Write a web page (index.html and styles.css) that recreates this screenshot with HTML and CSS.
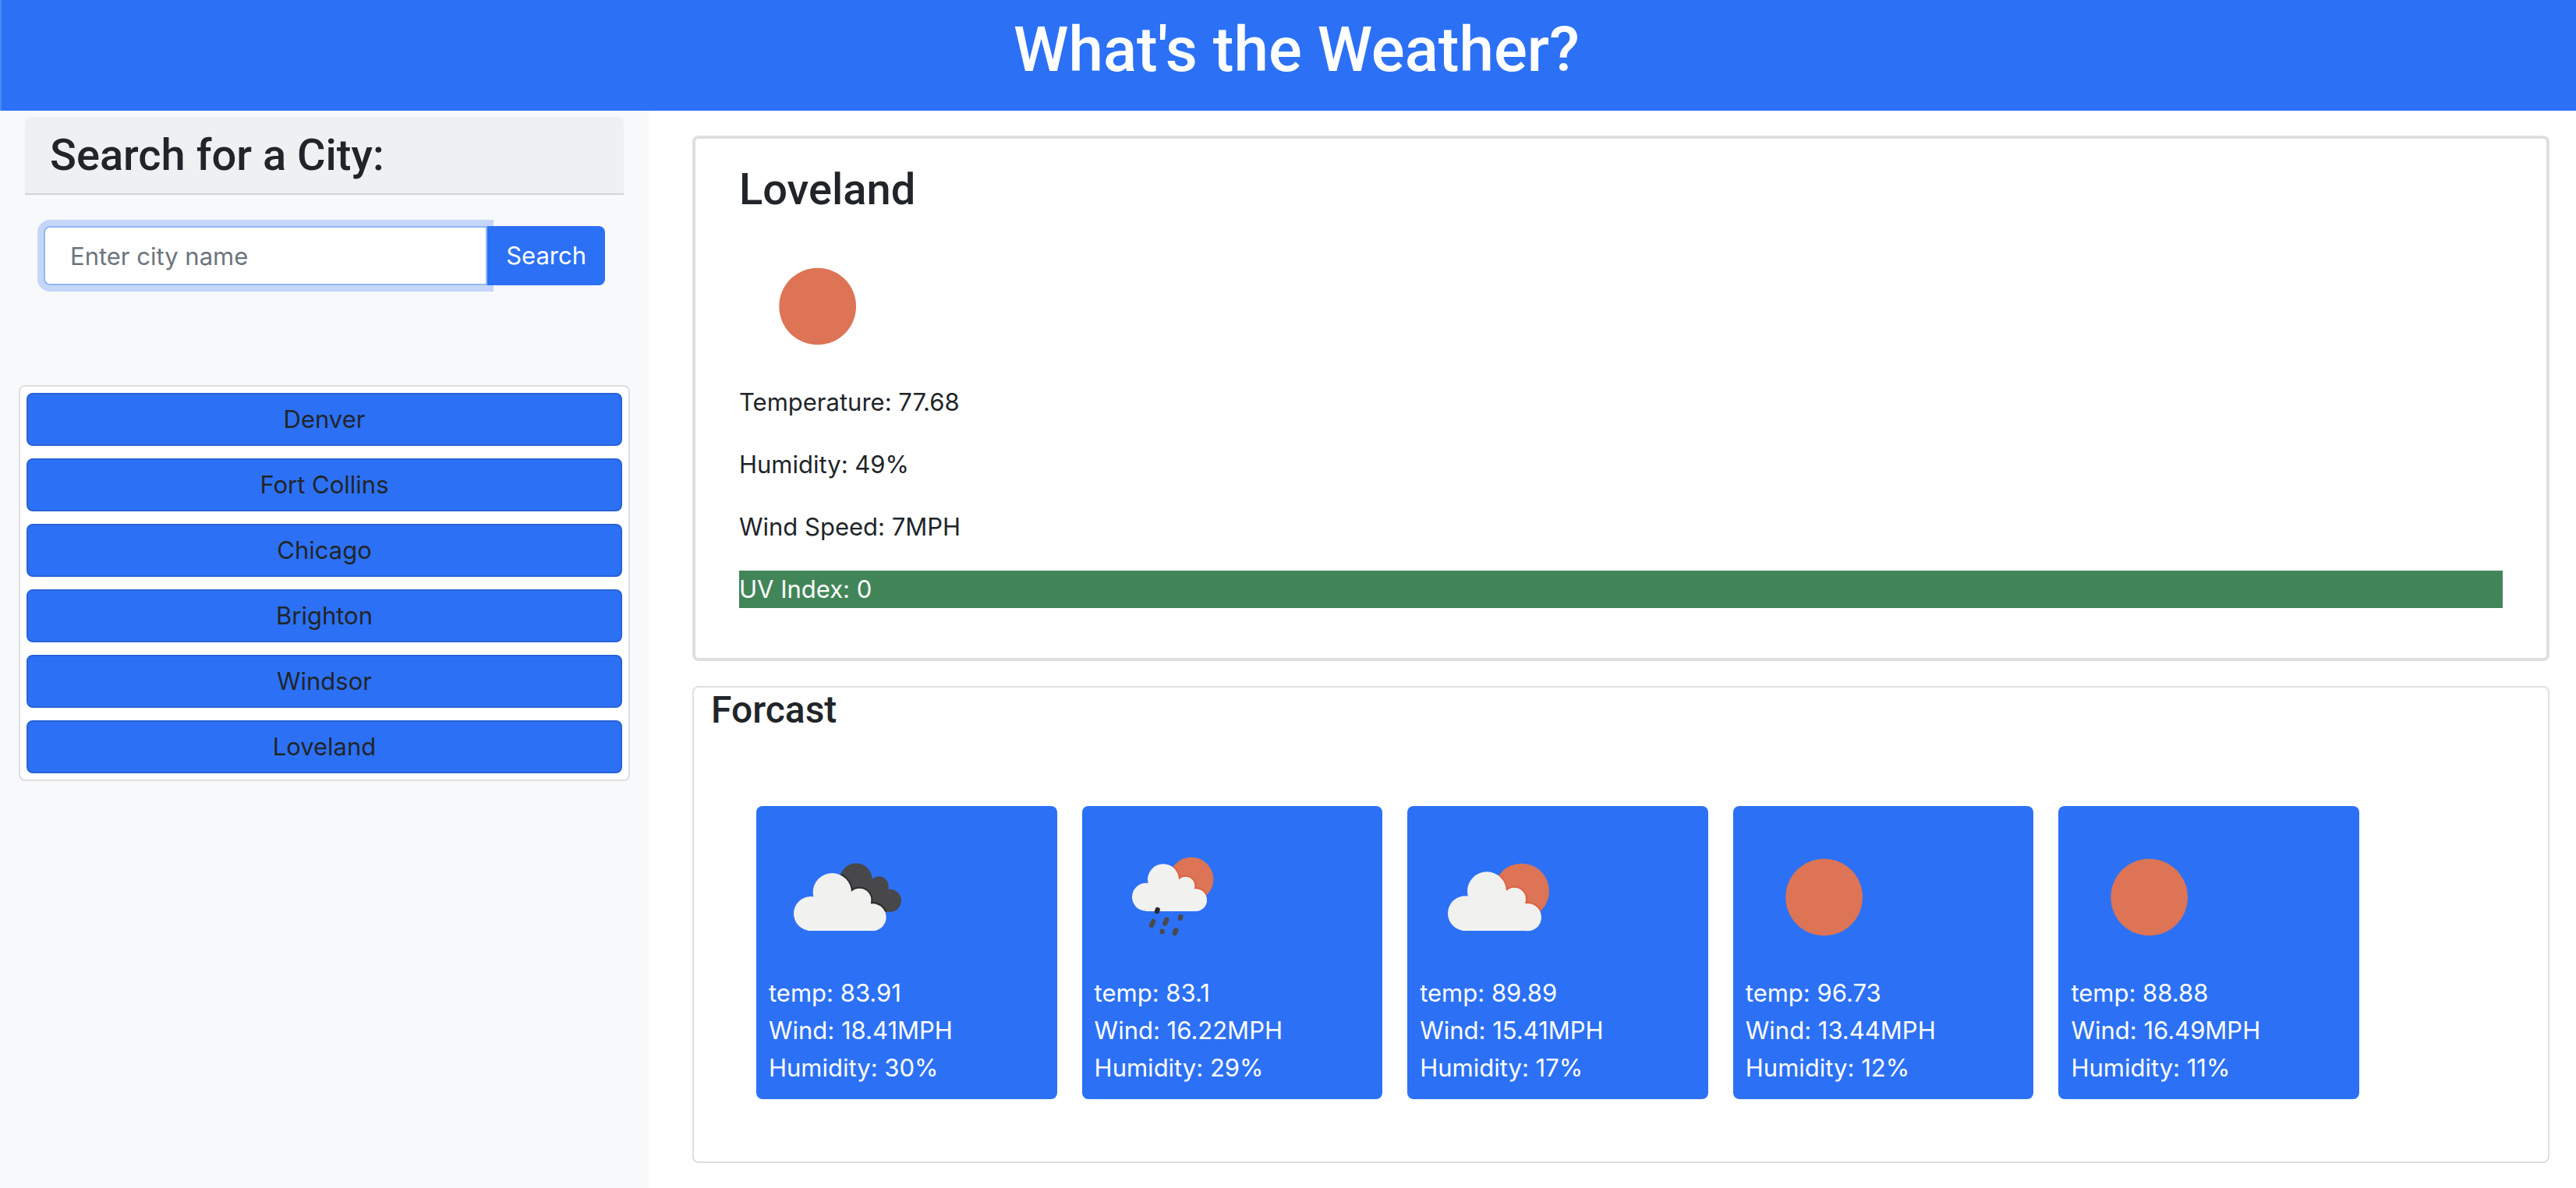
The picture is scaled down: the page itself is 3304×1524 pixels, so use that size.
FILE: index.html
```html
<!DOCTYPE html>
<html lang="en">
<head>
<meta charset="utf-8">
<title>What's the Weather?</title>
<link rel="stylesheet" href="styles.css">
</head>
<body>
<header class="banner"><h1 class="banner-title">What's the Weather?</h1></header>
<div class="layout">
  <aside class="sidebar">
    <h2 class="search-heading"><label for="city">Search for a City:</label></h2>
    <form class="search-form">
      <input class="search-input" id="city" type="text" placeholder="Enter city name">
      <button class="search-button" type="button">Search</button>
    </form>
    <div class="history">
      <button class="history-item" type="button">Denver</button>
      <button class="history-item" type="button">Fort Collins</button>
      <button class="history-item" type="button">Chicago</button>
      <button class="history-item" type="button">Brighton</button>
      <button class="history-item" type="button">Windsor</button>
      <button class="history-item" type="button">Loveland</button>
    </div>
  </aside>
  <main class="content">
    <section class="current">
      <h2 class="current-city">Loveland</h2>
      <svg class="weather-icon" viewBox="0 0 600 600" role="img" aria-label="Clear sky"><circle class="sun" cx="302" cy="303" r="148"/></svg>
      <p class="reading">Temperature: 77.68</p>
      <p class="reading">Humidity: 49%</p>
      <p class="reading">Wind Speed: 7MPH</p>
      <p class="reading uv-low">UV Index: 0</p>
    </section>
    <section class="forecast">
      <h3 class="forecast-heading">Forcast</h3>
      <div class="days">
        <article class="day">
          <svg class="weather-icon" viewBox="0 0 600 600" role="img" aria-label="Broken clouds">
            <clipPath id="dark-cloud"><circle cx="336" cy="234" r="62"/><circle cx="424" cy="260" r="37"/><circle cx="466" cy="316" r="44"/><path d="M280 220L397 232L461 270L450 360L300 360Z"/></clipPath>
            <g clip-path="url(#dark-cloud)">
              <path class="dark" d="M250 160h270v210H250z"/>
              <g class="dark-edge"><circle cx="244" cy="284" r="74"/><circle cx="349" cy="314" r="45"/><circle cx="400" cy="380" r="53"/></g>
            </g>
            <g class="cloud"><circle cx="162" cy="366" r="66"/><circle cx="244" cy="284" r="74"/><circle cx="349" cy="314" r="45"/><circle cx="400" cy="380" r="52"/><path d="M173 300L317 282L393 328L412 432H150V365Z"/></g>
          </svg>
          <p>temp: 83.91</p><p>Wind: 18.41MPH</p><p>Humidity: 30%</p>
        </article>
        <article class="day">
          <svg class="weather-icon" viewBox="0 0 600 600" role="img" aria-label="Rain">
            <clipPath id="rain-sun"><circle cx="372" cy="234" r="85"/></clipPath>
            <circle class="sun" cx="372" cy="234" r="85"/>
            <g class="sun-edge" clip-path="url(#rain-sun)"><circle cx="264" cy="235" r="60"/><circle cx="350" cy="259" r="35"/><circle cx="389" cy="314" r="43"/></g>
            <g class="cloud"><circle cx="198" cy="302" r="54"/><circle cx="264" cy="235" r="60"/><circle cx="350" cy="259" r="35"/><circle cx="389" cy="314" r="43"/><path d="M206 248L323 233L385 272L389 357H198Z"/></g>
            <path class="drops" d="M226 396L219 411M277 389L271 404M331 379L330 383M260 434L260 436M313 430L308 441"/>
            <path class="drops drop-near" d="M242 351L240 357"/>
          </svg>
          <p>temp: 83.1</p><p>Wind: 16.22MPH</p><p>Humidity: 29%</p>
        </article>
        <article class="day">
          <svg class="weather-icon" viewBox="0 0 600 600" role="img" aria-label="Few clouds">
            <clipPath id="few-sun"><circle cx="392" cy="279" r="106"/></clipPath>
            <circle class="sun" cx="392" cy="279" r="106"/>
            <g class="sun-edge" clip-path="url(#few-sun)"><circle cx="258" cy="280" r="75"/><circle cx="364" cy="310" r="44"/><circle cx="415" cy="380" r="53"/></g>
            <g class="cloud"><circle cx="175" cy="365" r="67"/><circle cx="258" cy="280" r="75"/><circle cx="364" cy="310" r="44"/><circle cx="415" cy="380" r="53"/><path d="M186 298L332 279L408 328L428 432H164V365Z"/></g>
          </svg>
          <p>temp: 89.89</p><p>Wind: 15.41MPH</p><p>Humidity: 17%</p>
        </article>
        <article class="day">
          <svg class="weather-icon" viewBox="0 0 600 600" role="img" aria-label="Clear sky"><circle class="sun" cx="302" cy="303" r="148"/></svg>
          <p>temp: 96.73</p><p>Wind: 13.44MPH</p><p>Humidity: 12%</p>
        </article>
        <article class="day">
          <svg class="weather-icon" viewBox="0 0 600 600" role="img" aria-label="Clear sky"><circle class="sun" cx="302" cy="303" r="148"/></svg>
          <p>temp: 88.88</p><p>Wind: 16.49MPH</p><p>Humidity: 11%</p>
        </article>
      </div>
    </section>
  </main>
</div>
</body>
</html>
```
FILE: styles.css
```css
*, *::before, *::after { box-sizing: border-box; }
body {
  margin: 0;
  min-height: 100vh;
  display: flex;
  flex-direction: column;
  background: #fff;
  color: #212529;
  font-family: Inter, "Liberation Sans", sans-serif;
  font-size: 31px;
  line-height: 48px;
}
h1, h2, h3, p { margin: 0; }
h1, h2, h3 { font-family: Roboto, Inter, sans-serif; font-weight: 500; }
button, input { font: inherit; margin: 0; }

.banner {
  padding: 16px 0 30px 20px;
  border-left: 2px solid #4c88f7;
  background: #2c71f5;
  color: #fff;
  text-align: center;
}
.banner-title { font-size: 80px; line-height: 96px; }

.layout { flex: 1; display: flex; }
.sidebar { flex: 0 0 832px; min-width: 0; padding: 8px 24px 0; background: #f8f9fb; }
.search-heading {
  margin: 0 8px;
  padding: 16px 32px;
  border-bottom: 2px solid #d3d4d6;
  border-radius: 8px 8px 0 0;
  background: #eff0f2;
  font-size: 56px;
  line-height: 66px;
}
.search-form { display: flex; padding: 40px 32px 128px; }
.search-input {
  position: relative;
  z-index: 1;
  flex: 1;
  min-width: 0;
  height: 76px;
  padding: 0 32px;
  border: 2px solid #90b7f9;
  border-radius: 8px 0 0 8px;
  outline: 0;
  background: #fff;
  box-shadow: 0 0 0 8px rgba(44, 113, 245, .25);
  color: #212529;
}
.search-input::placeholder { color: #6c757d; opacity: 1; }
.search-button {
  position: relative;
  z-index: 2;
  height: 76px;
  padding: 0 24px;
  border: 0;
  border-radius: 0 8px 8px 0;
  background: #2c71f5;
  color: #fff;
}
.history {
  display: grid;
  gap: 16px;
  padding: 8px;
  border: 2px solid #dedfe0;
  border-radius: 8px;
  background: #fff;
}
.history-item {
  height: 68px;
  border: 2px solid #2863d6;
  border-radius: 8px;
  background: #2c71f5;
  color: #212529;
}

.content { flex: 1; min-width: 0; padding: 32px 34px 32px 56px; }
.current { padding: 32px 56px; border: 4px solid #dfdfdf; border-radius: 8px; }
.current-city { margin-bottom: 16px; font-size: 56px; line-height: 66px; }
.weather-icon { display: block; width: 200px; height: 200px; }
.sun { fill: #dc7455; }
.sun-edge { fill: none; stroke: #dd6340; stroke-width: 12px; }
.cloud { fill: #f1f1f0; }
.dark { fill: #48484a; }
.dark-edge { fill: none; stroke: #2c2c2d; stroke-width: 12px; }
.drops { fill: none; stroke: #4a4a4c; stroke-width: 19px; stroke-linecap: round; }
.drop-near { stroke: #2c2c2d; }
.reading { margin-bottom: 32px; }
.uv-low { background: #428559; color: #fff; }

.forecast { margin-top: 32px; padding-bottom: 80px; border: 2px solid #dfdfdf; border-radius: 8px; }
.forecast-heading { padding: 0 22px; font-size: 48px; line-height: 58px; }
.days { display: grid; grid-template-columns: repeat(5, 1fr); gap: 32px; padding: 94px 242px 0 80px; }
.day { padding: 16px; border-radius: 8px; background: #2c71f5; color: #fff; }
```
